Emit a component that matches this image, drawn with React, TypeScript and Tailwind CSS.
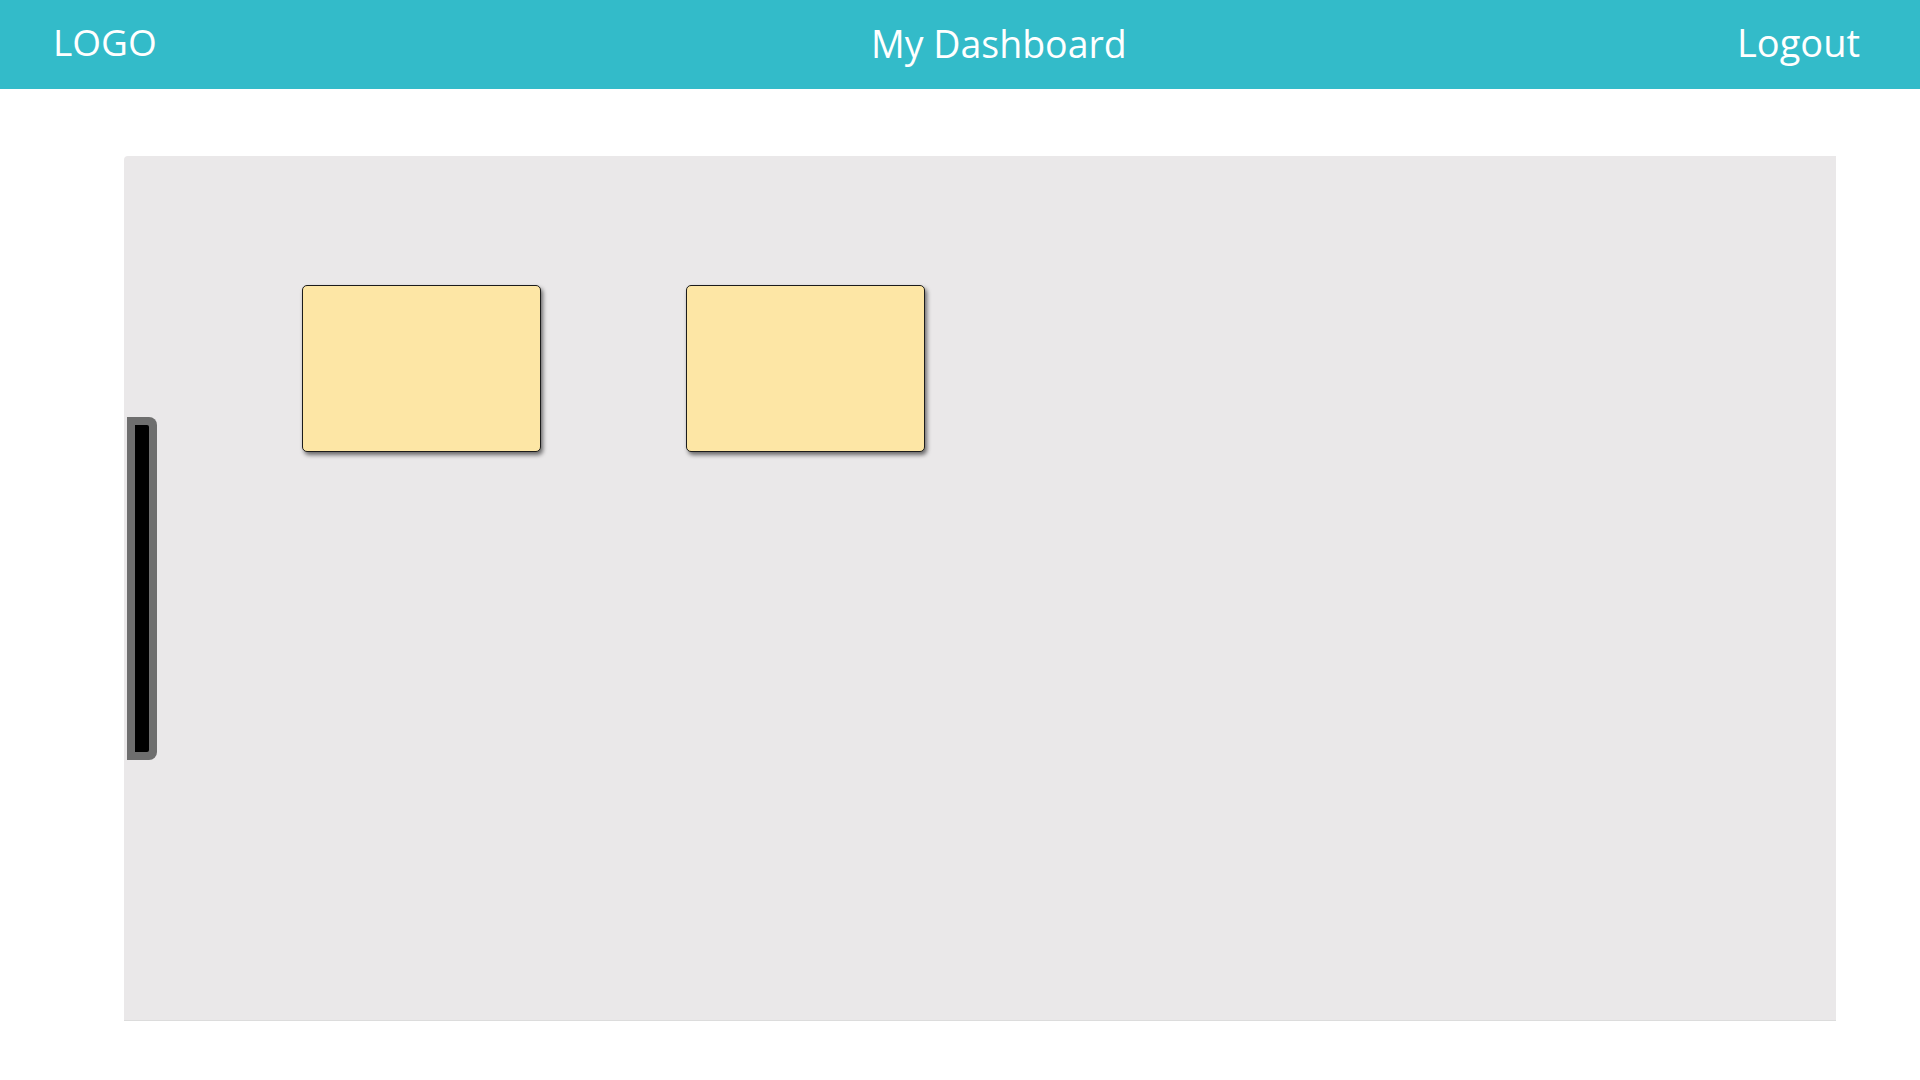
import React from "react";

const Card = () => (
  <div className="h-[167px] w-[239px] rounded-[5px] border border-[#1c1c1c] bg-[#fde6a5] shadow-[2px_3px_4px_rgba(0,0,0,0.55)]" />
);

const App = () => {
  return (
    <div className="min-h-screen w-[1920px] bg-white font-['Open_Sans',sans-serif]">
      <header className="flex h-[89px] items-center bg-[#33bbc9] pl-[53px] pr-[60px] text-white">
        <div className="pb-[6px] text-[37px] leading-none">LOGO</div>
        <div className="flex-1 pl-[104px] pb-[1px] text-center text-[37.5px] leading-none">
          My Dashboard
        </div>
        <div className="pb-[6px] text-[38px] leading-none">Logout</div>
      </header>

      <main className="ml-[124px] mt-[67px] flex h-[865px] w-[1712px] rounded-tl-[4px] border-b border-[#dcdcdc] bg-[#eae8e9] pl-[3px]">
        <div className="self-center">
          <div className="h-[343px] w-[30px] rounded-r-[8px] bg-[#6e6e6e] p-[8px]">
            <div className="h-full w-full rounded-r-[2px] bg-black" />
          </div>
        </div>
        <div className="ml-[145px] flex items-start gap-[145px] pt-[129px]">
          <Card />
          <Card />
        </div>
      </main>
    </div>
  );
};

export default App;
